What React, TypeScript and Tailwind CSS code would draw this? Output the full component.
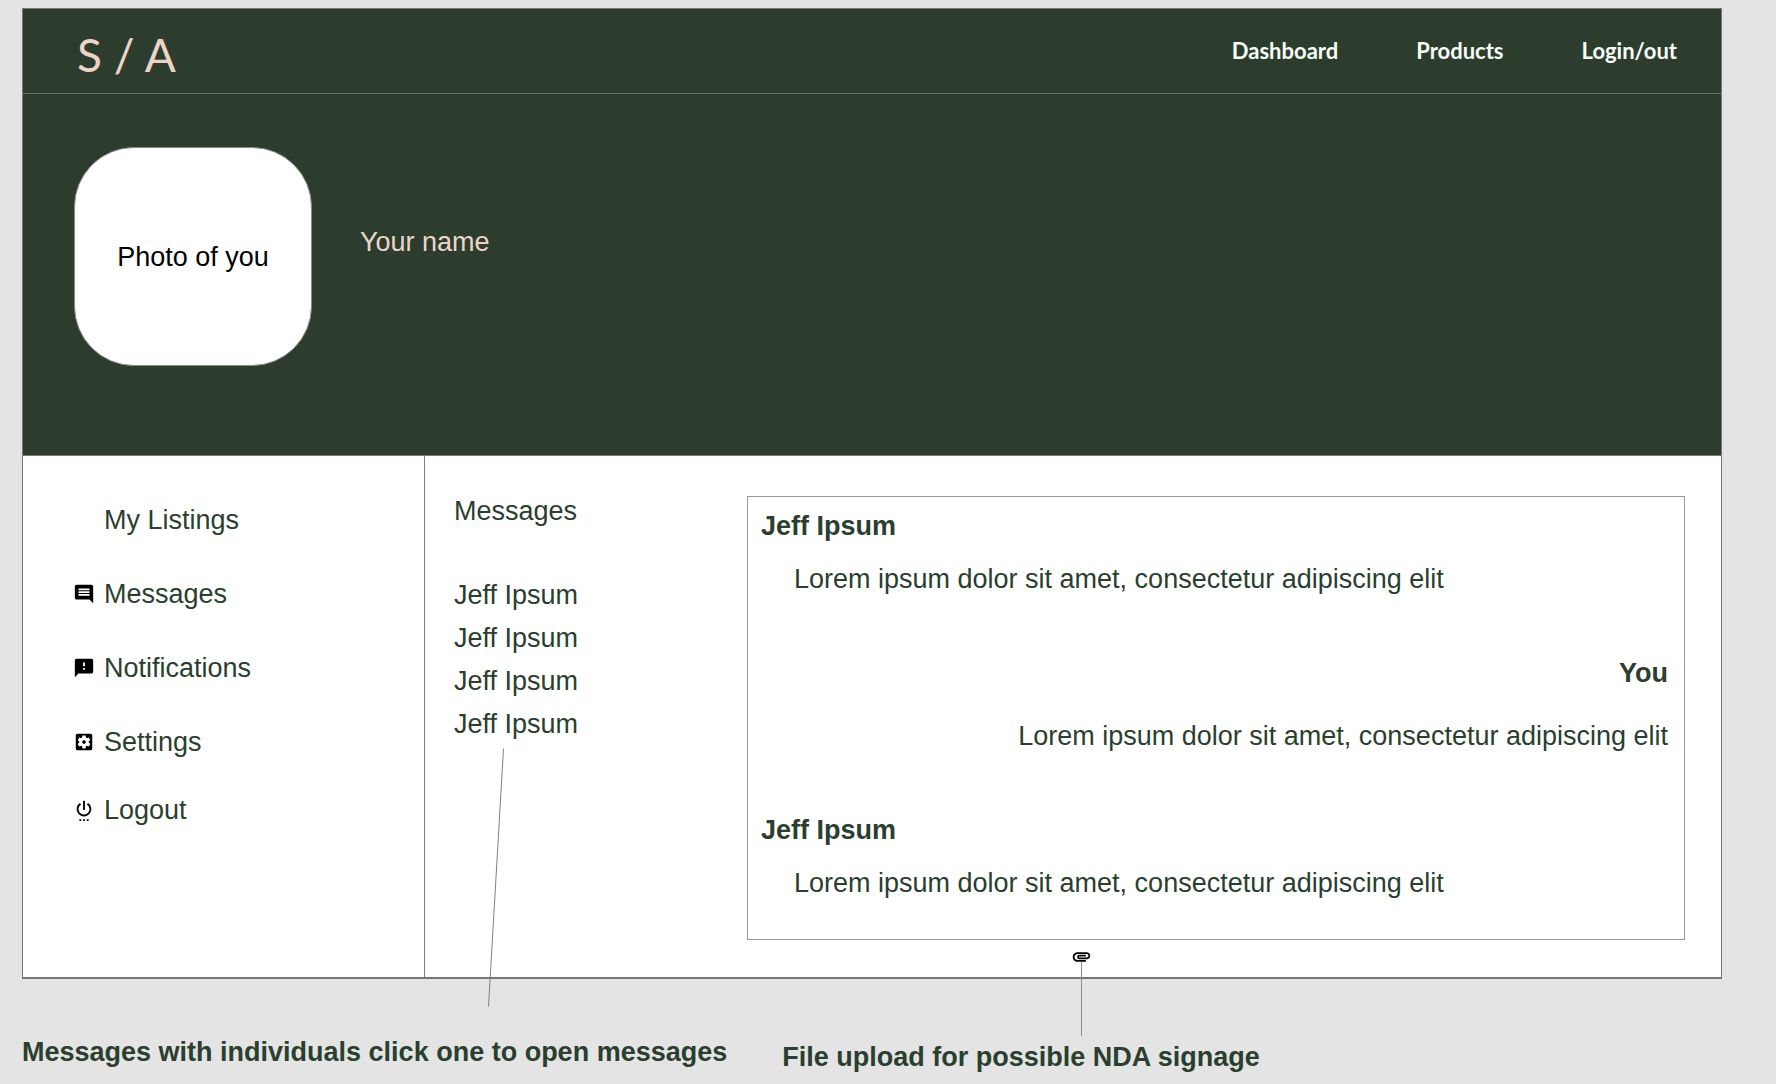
import React, { useRef } from "react";
import {
  MdAttachment,
  MdComment,
  MdFeedback,
  MdSettingsApplications,
  MdSettingsPower,
} from "react-icons/md";

const topLinks = ["Dashboard", "Products", "Login/out"];

const sideLinks = [
  { label: "My Listings", icon: null },
  { label: "Messages", icon: MdComment },
  { label: "Notifications", icon: MdFeedback },
  { label: "Settings", icon: MdSettingsApplications },
];

const contacts = ["Jeff Ipsum", "Jeff Ipsum", "Jeff Ipsum", "Jeff Ipsum"];

const lorem = "Lorem ipsum dolor sit amet, consectetur adipiscing elit";

const thread = [
  { author: "Jeff Ipsum", mine: false },
  { author: "You", mine: true },
  { author: "Jeff Ipsum", mine: false },
];

function TopBar() {
  return (
    <header className="flex h-[85px] items-center justify-between border-b border-[#6b706c] pr-11 pl-[54px] font-['Lato',sans-serif]">
      <a href="#home" className="pt-2 text-[46px] leading-[56px] font-normal whitespace-pre text-[#ecd5c8]">
        S / A
      </a>
      <nav aria-label="Main" className="flex gap-[78px] text-[22px] leading-[30px] font-bold text-[#f8fdf8]">
        {topLinks.map((label) => (
          <a key={label} href={"#" + label.toLowerCase()}>
            {label}
          </a>
        ))}
      </nav>
    </header>
  );
}

function Profile() {
  return (
    <section className="flex h-[362px] items-start border-b border-[#757575] pt-[53px] pl-[51px]">
      <div className="flex h-[219px] w-[238px] items-center justify-center rounded-[60px] border border-[#8a8a8a] bg-white text-black">
        Photo of you
      </div>
      <h1 className="mt-20 ml-12 text-[#ecd5c8]">Your name</h1>
    </section>
  );
}

function Sidebar() {
  return (
    <aside className="w-[402px] shrink-0 border-r border-[#808080] pt-[49px] pl-[50px]">
      <nav aria-label="Account">
        <ul className="flex flex-col gap-11">
          {sideLinks.map(({ label, icon: Icon }) => (
            <li key={label}>
              <a href={"#" + label} className="flex items-center gap-[9px]">
                <span className="size-[22px] text-black">{Icon && <Icon size={22} />}</span>
                {label}
              </a>
            </li>
          ))}
        </ul>
      </nav>
      <button type="button" className="mt-[38px] flex items-center gap-[9px]">
        <MdSettingsPower size={22} className="text-black" />
        Logout
      </button>
    </aside>
  );
}

function Contacts() {
  return (
    <section className="relative w-[322px] shrink-0 pt-10 pl-[29px]">
      <h2>Messages</h2>
      <ul className="mt-[54px] flex flex-col gap-[13px]">
        {contacts.map((name, i) => (
          <li key={i}>
            <button type="button" className="block">
              {name}
            </button>
          </li>
        ))}
      </ul>
      <svg
        aria-hidden="true"
        className="pointer-events-none absolute top-[292px] left-[62px]"
        width="18"
        height="260"
        fill="none"
        stroke="#808080"
      >
        <path d="M16.5 0.5 1.5 258.5" />
      </svg>
    </section>
  );
}

function Chat() {
  const fileInput = useRef<HTMLInputElement>(null);

  return (
    <section className="min-w-0 flex-1 pt-10 pr-9 pb-[10px]">
      <div className="flex flex-col gap-16 border border-[#9a9a9a] pt-[14px] pr-4 pb-[41px] pl-[13px]">
        {thread.map(({ author, mine }, i) => (
          <article
            key={i}
            className={mine ? "flex flex-col gap-[33px] text-right" : "flex flex-col gap-[23px]"}
          >
            <h3 className="font-bold">{author}</h3>
            <p className={mine ? "" : "pl-[33px]"}>{lorem}</p>
          </article>
        ))}
      </div>
      <div className="mt-1.5 flex pl-[324px]">
        <input ref={fileInput} type="file" aria-label="Upload a file" className="hidden" />
        <button
          type="button"
          aria-label="Upload a file"
          className="relative block text-black"
          onClick={() => fileInput.current?.click()}
        >
          <MdAttachment size={21} />
          <span className="pointer-events-none absolute top-4 left-[10px] h-[74px] w-px bg-[#8c8c8c]" />
        </button>
      </div>
    </section>
  );
}

export default function App() {
  return (
    <div className="min-h-screen bg-[#e4e4e4] pt-2 pr-[54px] pl-[22px] font-['Liberation_Sans',Arial,sans-serif] text-[27px] leading-[30px] text-[#2a3f2e]">
      <div className="border border-b-2 border-[#757575] bg-white">
        <div className="bg-[#2c3d2e]">
          <TopBar />
          <Profile />
        </div>
        <main className="flex min-h-[521px]">
          <Sidebar />
          <Contacts />
          <Chat />
        </main>
      </div>
      <div className="flex items-start gap-[55px] pt-[58px] font-bold">
        <p>Messages with individuals click one to open messages</p>
        <p className="pt-[5px]">File upload for possible NDA signage</p>
      </div>
    </div>
  );
}
